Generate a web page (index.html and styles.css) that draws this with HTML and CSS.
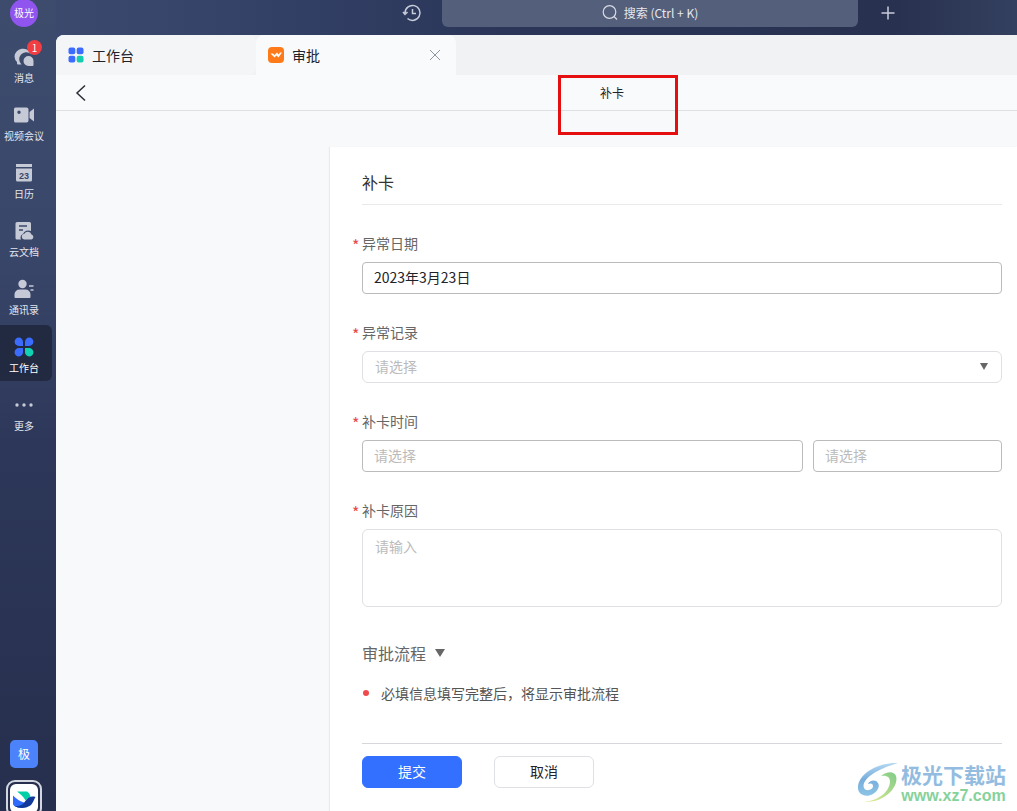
FILE: index.html
```html
<!DOCTYPE html>
<html lang="zh-CN">
<head>
<meta charset="utf-8">
<title>补卡</title>
<link rel="stylesheet" href="styles.css">
</head>
<body>
<div class="app">
  <nav class="sidebar">
    <div class="avatar">极光</div>
    <a class="nav-item" href="#">
      <svg class="nav-icon" viewBox="0 0 24 24"><path d="M2.500 11.500A8.500 8 0 0 1 19 9 7 7 0 0 0 9.500 19.500H6a1 1 0 0 1-1-1V17a8 8 0 0 1-2.500-5.500z" fill="#c6cad6"/><path d="M21.500 16v4a1 1 0 0 1-1 1H16.500a5 5 0 1 1 5-5z" fill="#c6cad6"/></svg>
      <span>消息</span><b class="badge">1</b>
    </a>
    <a class="nav-item" href="#">
      <svg class="nav-icon" viewBox="0 0 24 24"><path fill-rule="evenodd" d="M3.500 4.500h11a2 2 0 0 1 2 2v11a2 2 0 0 1-2 2h-11a1.500 1.500 0 0 1-1.500-1.500V6a1.500 1.500 0 0 1 1.500-1.500zM7 7.500a1.700 1.700 0 1 0 0 3.400 1.700 1.700 0 0 0 0-3.400z" fill="#c6cad6"/><path d="M17.500 9L22 5.500v13l-4.500-3.500z" fill="#c6cad6"/></svg>
      <span>视频会议</span>
    </a>
    <a class="nav-item" href="#">
      <svg class="nav-icon" viewBox="0 0 24 24"><path d="M4 3h16v3H4zM4 7.500h16V19a1.500 1.500 0 0 1-1.500 1.500h-13A1.500 1.500 0 0 1 4 19z" fill="#c6cad6"/><text x="12" y="17.500" class="calendar-day">23</text></svg>
      <span>日历</span>
    </a>
    <a class="nav-item" href="#">
      <svg class="nav-icon" viewBox="0 0 24 24"><path d="M5 3h12.500A1.500 1.500 0 0 1 19 4.500V12a6 6 0 0 0-8 3c-2.500 1-3 3.500-2 5.500H5A1.500 1.500 0 0 1 3.500 19V4.500A1.500 1.500 0 0 1 5 3z" fill="#c6cad6"/><path d="M7 7h8M7 11h4" stroke="#3a486a" stroke-width="1.500"/><path d="M12 20.500a2.900 2.900 0 0 1 .3-5.700 4 4 0 0 1 7.200.7 2.600 2.600 0 0 1 0 5z" fill="#c6cad6"/></svg>
      <span>云文档</span>
    </a>
    <a class="nav-item" href="#">
      <svg class="nav-icon" viewBox="0 0 24 24"><circle cx="10.500" cy="7" r="4.200" fill="#c6cad6"/><path d="M2.500 20v-2.500a5 5 0 0 1 5-5h6a5 5 0 0 1 5 5V20a1 1 0 0 1-1 1h-14a1 1 0 0 1-1-1z" fill="#c6cad6"/><path d="M17 9h4.500M18.500 13h3" stroke="#c6cad6" stroke-width="1.600"/></svg>
      <span>通讯录</span>
    </a>
    <a class="nav-item active" href="#">
      <svg class="nav-icon" viewBox="0 0 24 24"><path d="M11 11H7a4.200 4.200 0 1 1 4-4zM13 11V7a4.200 4.200 0 1 1 4 4zM11 13v4a4.200 4.200 0 1 1-4-4z" fill="#3b6cff"/><path d="M13 13h4a4.200 4.200 0 1 1-4 4z" fill="#12d0b2"/></svg>
      <span>工作台</span>
    </a>
    <a class="nav-item" href="#">
      <svg class="nav-icon" viewBox="0 0 24 24"><g fill="#c6cad6"><circle cx="5" cy="12" r="1.700"/><circle cx="12" cy="12" r="1.700"/><circle cx="19" cy="12" r="1.700"/></g></svg>
      <span>更多</span>
    </a>
    <div class="teams">
      <div class="team">极</div>
      <div class="team-current">
        <svg viewBox="0 0 28 28"><path d="M7 7h10c2 1 3 3 3.500 5l-5 4c-2-4-5-6.500-8.500-9z" fill="#00cfa8"/><path d="M3 11c4 4 8 6.500 13 7.500l4-1-3 4.500C11 25 3 22.500 3 19z" fill="#2f6bff"/><path d="M15 17c3-4 6-6 10.500-4.500-2 3-2.500 7-6 9-4 2.500-11 2.500-15 0 6 .5 8.500-1.500 10.500-4.500z" fill="#123a9b"/></svg>
      </div>
    </div>
  </nav>
  <header class="topbar">
    <button class="icon-button" aria-label="历史记录">
      <svg width="20" height="20" viewBox="0 0 20 20" fill="none" stroke="#c8cddb" stroke-width="1.500"><path d="M3 10a7.500 7.500 0 1 1 2.500 5.500M1 9l2 2.500L5.500 9M10.500 6v4.500H14"/></svg>
    </button>
    <button class="search">
      <svg width="16" height="16" viewBox="0 0 16 16" fill="none" stroke="#d8dbe4" stroke-width="1.200"><circle cx="7.500" cy="7" r="6.300"/><path d="M12 11.500l3 3"/></svg>
      <span>搜索 (Ctrl + K)</span>
    </button>
    <button class="icon-button" aria-label="新建">
      <svg width="20" height="20" viewBox="0 0 20 20" stroke="#c8cddb" stroke-width="1.500"><path d="M10 3.500v13M3.500 10h13"/></svg>
    </button>
  </header>
  <main class="main">
    <div class="tabs">
      <div class="tab">
        <svg width="16" height="16" viewBox="0 0 16 16"><g fill="#3b6cff"><rect x="0.500" y="0.500" width="6.800" height="6.800" rx="2"/><rect x="8.700" y="0.500" width="6.800" height="6.800" rx="2"/><rect x="0.500" y="8.700" width="6.800" height="6.800" rx="2"/></g><rect x="8.700" y="8.700" width="6.800" height="6.800" rx="2" fill="#12cdb0"/></svg>
        <span>工作台</span>
      </div>
      <div class="tab tab-active">
        <svg width="16" height="16" viewBox="0 0 16 16"><rect width="16" height="16" rx="4" fill="#ff7a18"/><path d="M2.500 6.500h2.500l1.500 1.500L9 5.500l1.500 2L12 5.500h2L10.500 10.500 8.500 8.500 6.500 10.500z" fill="#fff"/></svg>
        <span>审批</span>
        <button class="tab-close" aria-label="关闭"><svg width="12" height="12" viewBox="0 0 12 12" stroke="#8f959e"><path d="M1 1l10 10M11 1L1 11"/></svg></button>
      </div>
    </div>
    <div class="page-bar">
      <button class="back" aria-label="返回"><svg width="16" height="18" viewBox="0 0 16 18" fill="none" stroke="#2b2f36" stroke-width="1.500"><path d="M13 1.500L5 9l8 7.500"/></svg></button>
      <h1 class="page-title">补卡</h1>
      <div class="highlight"></div>
    </div>
    <form class="card">
      <h2 class="card-title">补卡</h2>
      <div class="field">
        <label for="date">异常日期</label>
        <input id="date" type="text" value="2023年3月23日">
      </div>
      <div class="field">
        <label for="record">异常记录</label>
        <div class="select-wrap">
          <select id="record"><option>请选择</option></select>
          <svg class="caret" width="8" height="7" viewBox="0 0 8 7"><path d="M0 0h8L4 7z" fill="#666"/></svg>
        </div>
      </div>
      <div class="field">
        <label for="time-day">补卡时间</label>
        <div class="pair">
          <input id="time-day" type="text" placeholder="请选择">
          <input type="text" placeholder="请选择" aria-label="补卡时间（时刻）">
        </div>
      </div>
      <div class="field">
        <label for="reason">补卡原因</label>
        <textarea id="reason" placeholder="请输入"></textarea>
      </div>
      <h3 class="flow-title">审批流程 <svg width="10" height="8" viewBox="0 0 10 8"><path d="M0 0h10L5 8z" fill="#666"/></svg></h3>
      <ul class="notes"><li>必填信息填写完整后，将显示审批流程</li></ul>
      <div class="actions">
        <button type="button" class="button button-primary">提交</button>
        <button type="button" class="button">取消</button>
      </div>
    </form>
  </main>
  <div class="watermark">
    <svg width="44" height="42" viewBox="0 0 44 42"><defs><linearGradient id="swirl" x1="0" y1="0" x2="0" y2="1"><stop offset="0" stop-color="#b4d8f3"/><stop offset="0.500" stop-color="#78aedb"/><stop offset="1" stop-color="#8cc4e6"/></linearGradient><linearGradient id="leaf" x1="1" y1="0" x2="0" y2="1"><stop offset="0" stop-color="#7fcc86"/><stop offset="1" stop-color="#e6eb94"/></linearGradient></defs><path d="M41 1C25 0 3 9 1 24c-1 9 8 12 15 8 5-3 7-8 5-11-2-4-9-3-10 1 2-1 5-1 5 2 0 4-7 6-9 2C4 17 20 7 41 1z" fill="url(#swirl)"/><path d="M24 14c6-5 13-5 15 0 3 9-9 27-33 26 14-1 26-9 27-20 0-5-3-7-9-6z" fill="url(#leaf)"/></svg>
    <div class="watermark-text"><span class="watermark-name">极光下载站</span><span class="watermark-url">www.xz7.com</span></div>
  </div>
</div>
</body>
</html>
```
FILE: styles.css
```css
* { box-sizing: border-box; }
body {
  margin: 0;
  font: 14px/20px "Noto Sans CJK SC", sans-serif;
  color: #1f2329;
}
h1, h2, h3, ul { margin: 0; padding: 0; font-weight: 400; }
button, input, select, textarea { font: inherit; color: inherit; margin: 0; }
button { border: 0; padding: 0; background: none; }
svg { display: block; flex: none; }

.app {
  position: relative;
  display: grid;
  grid-template: 35px 1fr / 56px 1fr;
  height: 100vh;
  overflow: hidden;
  background: linear-gradient(90deg, #3c4b6e 0, #36446a 20%, #2a3558 50%, #28314f 88%, #34405f 100%);
}

.sidebar {
  grid-row: 1 / 3;
  display: flex;
  flex-direction: column;
  gap: 2px;
  background: linear-gradient(180deg, #3d4b6d 0, #39476a 30%, #2d3759 55%, #262f4d 100%);
}
.avatar {
  width: 28px;
  height: 28px;
  margin: -1px 14px 6px 10px;
  border-radius: 50%;
  background: #8f55ee;
  color: #fff;
  font-size: 10px;
  line-height: 28px;
  text-align: center;
}
.nav-item {
  position: relative;
  display: flex;
  flex-direction: column;
  align-items: center;
  gap: 1px;
  width: 52px;
  height: 56px;
  padding: 10px 4px 0 0;
  border-radius: 0 6px 6px 0;
  color: #e3e6ee;
  font-size: 10px;
  line-height: 16px;
  text-decoration: none;
  white-space: nowrap;
}
.nav-icon { width: 24px; height: 24px; }
.active { background: #212a41; color: #fff; }
.calendar-day {
  font: bold 9px "Liberation Sans", sans-serif;
  text-anchor: middle;
  fill: #3a486a;
}
.badge {
  position: absolute;
  top: 5px;
  left: 27px;
  width: 15px;
  height: 15px;
  border-radius: 50%;
  background: #f03e42;
  color: #fff;
  font-size: 10px;
  font-weight: 400;
  line-height: 15px;
  text-align: center;
}
.teams { margin: auto 0 -6px 6px; }
.team {
  width: 28px;
  height: 28px;
  margin: 0 0 12px 4px;
  border-radius: 5px;
  background: #4c83fa;
  color: #fff;
  font-size: 12px;
  line-height: 28px;
  text-align: center;
}
.team-current {
  width: 36px;
  height: 37px;
  padding: 2px;
  border: 2px solid #d4d7df;
  border-radius: 9px;
}
.team-current svg { width: 28px; height: 29px; border-radius: 6px; background: #fff; }

.topbar {
  display: flex;
  align-items: flex-start;
  gap: 20px;
  padding: 0 119px 0 346px;
}
.icon-button { margin-top: 3px; }
.search {
  flex: 1;
  display: flex;
  align-items: center;
  justify-content: center;
  gap: 6px;
  height: 27px;
  padding-bottom: 2px;
  border-radius: 0 0 6px 6px;
  background: #545f7b;
  color: #e6e8ee;
  font-size: 12px;
}

.main {
  display: flex;
  flex-direction: column;
  min-height: 0;
  border-radius: 8px 0 0 0;
  overflow: hidden;
  background: #f7f9fb;
}
.tabs { display: flex; height: 40px; background: #f1f2f4; }
.tab {
  display: flex;
  align-items: center;
  gap: 8px;
  width: 200px;
  padding: 0 15px 0 12px;
  border-radius: 8px 8px 8px 0;
  background: #f4f5f7;
}
.tab-active { border-radius: 8px 8px 0 0; background: #f9fafc; }
.tab-close { margin-left: auto; }
.page-bar {
  position: relative;
  display: flex;
  align-items: center;
  height: 36px;
  padding-left: 16px;
  border-bottom: 1px solid #dee0e3;
  background: #f9fafc;
}
.page-title { flex: 1; padding-left: 119px; font-size: 12px; text-align: center; }
.highlight {
  position: absolute;
  top: 0;
  left: 502px;
  width: 120px;
  height: 60px;
  border: 3px solid #e60f10;
}

.card {
  flex: 1;
  margin: 36px 0 0 274px;
  padding: 23px 15px 0 32px;
  background: #fff;
  box-shadow: -1px 0 1px #e9ebee;
}
.card-title {
  margin-bottom: 29px;
  padding-bottom: 10px;
  border-bottom: 1px solid #e8e9eb;
  color: #333;
  font-size: 16px;
  line-height: 24px;
}
.field { display: flex; flex-direction: column; gap: 10px; margin-bottom: 29px; }
.field label { position: relative; color: #666; line-height: 18px; }
.field label::before {
  content: "*";
  position: absolute;
  top: 2px;
  left: -10px;
  color: #e8484a;
  font-size: 16px;
}
input, select, textarea {
  width: 100%;
  min-width: 0;
  height: 32px;
  padding: 0 11px 2px;
  border: 1px solid #bbb;
  border-radius: 4px;
  background: #fff;
}
::placeholder { color: #bbb; opacity: 1; }
select, textarea { padding-left: 12px; border-color: #dee0e3; border-radius: 6px; }
select { appearance: none; color: #bbb; }
textarea { display: block; height: 78px; padding-top: 6px; resize: none; }
.select-wrap { position: relative; }
.caret { position: absolute; top: 12px; right: 14px; }
.pair { display: grid; grid-template-columns: 7fr 3fr; gap: 10px; }
.flow-title {
  display: flex;
  align-items: center;
  gap: 9px;
  margin: 34px 0 18px;
  color: #666;
  font-size: 16px;
  line-height: 24px;
}
.notes { list-style: none; color: #555; }
.notes li { display: flex; align-items: center; gap: 12px; }
.notes li::before {
  content: "";
  width: 6px;
  height: 6px;
  margin-left: 1px;
  border-radius: 50%;
  background: #f04a4c;
}
.actions {
  display: flex;
  gap: 32px;
  margin-top: 40px;
  padding-top: 12px;
  border-top: 1px solid #d5d7da;
}
.button {
  width: 100px;
  height: 32px;
  padding-bottom: 2px;
  border: 1px solid #dee0e3;
  border-radius: 6px;
  background: #fff;
}
.button-primary { border-color: #3370ff; background: #3370ff; color: #fff; }

.watermark {
  position: absolute;
  right: 11px;
  bottom: 6px;
  display: flex;
  align-items: center;
}
.watermark-text { display: flex; flex-direction: column; align-items: center; }
.watermark-name { color: #93bce0; font-size: 21px; font-weight: 700; line-height: 26px; }
.watermark-url { color: #86d29b; font: bold 16px/18px "Liberation Sans", sans-serif; }
```
